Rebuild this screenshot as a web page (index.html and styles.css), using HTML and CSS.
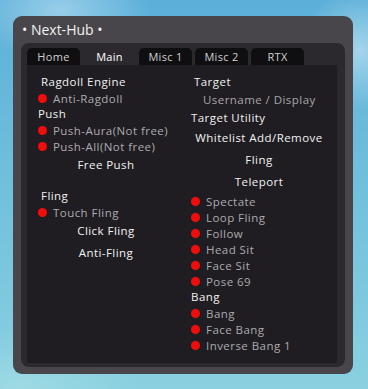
FILE: index.html
```html
<!DOCTYPE html>
<html>
<head>
<meta charset="utf-8">
<link rel="stylesheet" href="styles.css">
</head>
<body>
<div class="window">
  <div class="title">• Next-Hub •</div>
  <div class="panel">
    <div class="tabs">
      <div class="tab">Home</div>
      <div class="tab active">Main</div>
      <div class="tab">Misc 1</div>
      <div class="tab">Misc 2</div>
      <div class="tab">RTX</div>
    </div>
    <div class="content">
      <div class="col">
        <div class="head indent">Ragdoll Engine</div>
        <div class="toggle"><span class="dot"></span>Anti-Ragdoll</div>
        <div class="head">Push</div>
        <div class="toggle"><span class="dot"></span>Push-Aura(Not free)</div>
        <div class="toggle"><span class="dot"></span>Push-All(Not free)</div>
        <div class="btn">Free Push</div>
        <div class="spacer"></div>
        <div class="head indent">Fling</div>
        <div class="toggle"><span class="dot"></span>Touch Fling</div>
        <div class="btn">Click Fling</div>
        <div class="btn">Anti-Fling</div>
      </div>
      <div class="col">
        <div class="head indent">Target</div>
        <div class="input">Username / Display</div>
        <div class="head tall">Target Utility</div>
        <div class="btn">Whitelist Add/Remove</div>
        <div class="btn">Fling</div>
        <div class="btn">Teleport</div>
        <div class="toggle"><span class="dot"></span>Spectate</div>
        <div class="toggle"><span class="dot"></span>Loop Fling</div>
        <div class="toggle"><span class="dot"></span>Follow</div>
        <div class="toggle"><span class="dot"></span>Head Sit</div>
        <div class="toggle"><span class="dot"></span>Face Sit</div>
        <div class="toggle"><span class="dot"></span>Pose 69</div>
        <div class="head">Bang</div>
        <div class="toggle"><span class="dot"></span>Bang</div>
        <div class="toggle"><span class="dot"></span>Face Bang</div>
        <div class="toggle"><span class="dot"></span>Inverse Bang 1</div>
      </div>
    </div>
  </div>
</div>
</body>
</html>
```
FILE: styles.css
```css
html, body {
  margin: 0;
  padding: 0;
}
body {
  width: 368px;
  height: 389px;
  overflow: hidden;
  font-family: "Open Sans", "Liberation Sans", sans-serif;
  background:
    radial-gradient(ellipse 90px 50px at 60px 10px, rgba(200,230,245,0.55), rgba(200,230,245,0) 100%),
    radial-gradient(ellipse 60px 60px at 360px 50px, rgba(210,235,245,0.6), rgba(210,235,245,0) 100%),
    radial-gradient(ellipse 120px 60px at 20px 389px, rgba(170,225,230,0.6), rgba(170,225,230,0) 100%),
    linear-gradient(180deg, #5cafd9 0%, #6fbfdc 45%, #8ad0e0 100%);
  padding-top: 16px;
  box-sizing: border-box;
}
.window {
  margin-left: 13px;
  width: 340px;
  height: 358px;
  box-sizing: border-box;
  background: #48464b;
  border-radius: 9px;
  padding: 0 8px 7px 8px;
  display: flex;
  flex-direction: column;
}
.title {
  height: 27px;
  line-height: 27px;
  padding-left: 1px;
  color: #f2f2f2;
  font-size: 14px;
  flex: none;
}
.panel {
  flex: 1;
  background: #2b292e;
  border-radius: 8px;
  padding: 5px 8px 4px 6px;
  display: flex;
  flex-direction: column;
}
.tabs {
  display: flex;
  gap: 3px;
  height: 17px;
  flex: none;
}
.tab {
  width: 53px;
  background: #0f0e11;
  border-radius: 5px 5px 0 0;
  color: #cfcfd1;
  font-size: 11px;
  letter-spacing: 0.3px;
  line-height: 17px;
  text-align: center;
}
.tab.active {
  background: transparent;
  color: #ffffff;
}
.content {
  flex: 1;
  background: #1f1d21;
  display: flex;
  gap: 17px;
  padding: 9px 10px 0 11px;
  letter-spacing: 0.45px;
}
.col {
  width: 136px;
  display: flex;
  flex-direction: column;
}
.head {
  height: 16px;
  line-height: 16px;
  color: #f0f0f0;
  font-size: 11.5px;
  white-space: nowrap;
}
.head.indent {
  padding-left: 3px;
}
.head.tall {
  height: 18px;
  line-height: 18px;
}
.toggle {
  height: 16px;
  display: flex;
  align-items: center;
  gap: 6px;
  color: #ababae;
  font-size: 11.5px;
  white-space: nowrap;
}
.dot {
  width: 9px;
  height: 9px;
  border-radius: 50%;
  background: #f20d0d;
  flex: none;
}
.btn {
  height: 22px;
  line-height: 22px;
  text-align: center;
  color: #f2f2f2;
  font-size: 11.5px;
  white-space: nowrap;
}
.spacer {
  height: 12px;
}
.input {
  height: 19px;
  line-height: 19px;
  padding-left: 12px;
  color: #a7a7aa;
  font-size: 11.5px;
  white-space: nowrap;
}
```
